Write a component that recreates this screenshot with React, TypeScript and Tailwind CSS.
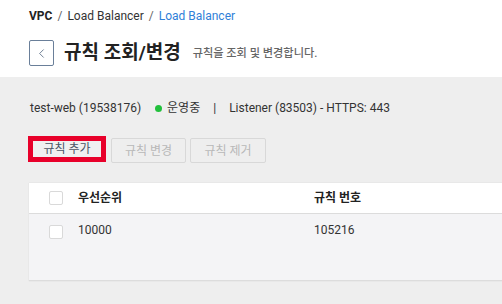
import { ChevronLeft } from 'lucide-react';

const FONT = "font-['Roboto','Noto_Sans_CJK_KR',sans-serif]";

function Checkbox() {
  return <span className="block w-[14px] h-[14px] bg-white border border-[#d9d9d9] rounded-[2px]" />;
}

export default function App() {
  return (
    <div className={`w-[502px] h-[304px] overflow-hidden bg-[#eeeeee] ${FONT}`}>
      {/* Header */}
      <div className="h-[77px] bg-white pl-[29px]">
        <div className="pt-[7px] flex items-center text-[12px] leading-[18px] text-[#333]">
          <span className="font-bold text-[#222]">VPC</span>
          <span className="mx-[5px] text-[#666]">/</span>
          <span>Load Balancer</span>
          <span className="mx-[5px] text-[#666]">/</span>
          <span className="text-[#2f80d8]">Load Balancer</span>
        </div>
        <div className="mt-[14px] flex items-center">
          <button className="w-[25px] h-[26px] border border-[#6a7f99] rounded-[2px] flex items-center justify-center text-[#4a5f7a]">
            <ChevronLeft size={15} strokeWidth={1.25} />
          </button>
          <h1 className="ml-[10px] text-[19px] font-bold text-[#222] leading-[26px]">규칙 조회/변경</h1>
          <span className="ml-[12px] text-[11.2px] text-[#666] font-medium leading-[26px] mt-[2px]">규칙을 조회 및 변경합니다.</span>
        </div>
      </div>

      {/* Body */}
      <div className="pl-[30px] pt-[22px]">
        <div className="flex items-center h-[18px] text-[12px] text-[#333]">
          <span>test-web (19538176)</span>
          <span className="ml-[14px] w-[7px] h-[7px] rounded-full bg-[#22c03c]" />
          <span className="ml-[5px]">운영중</span>
          <span className="ml-[13px]">|</span>
          <span className="ml-[13px]">Listener (83503) - HTTPS: 443</span>
        </div>

        <div className="mt-[19px] flex items-start text-[12px]">
          <button className="-ml-[2px] w-[78px] h-[26px] border-[5px] border-[#e8002a] bg-[#f0f0f0] text-[#4a5466] flex items-center justify-center">
            규칙 추가
          </button>
          <button className="ml-[5px] mt-[2px] w-[75px] h-[25px] border border-[#d8d8d8] rounded-[2px] text-[#b8b8b8]">
            규칙 변경
          </button>
          <button className="ml-[4px] mt-[2px] w-[76px] h-[25px] border border-[#d8d8d8] rounded-[2px] text-[#b8b8b8]">
            규칙 제거
          </button>
        </div>

        <div className="mt-[20px] -ml-[1px] w-[520px] shadow-[0_0_1px_rgba(0,0,0,0.15)] text-[12px]">
          <div className="h-[31px] bg-white border-b border-[#dcdcdc] flex items-center font-bold text-[#222]">
            <div className="w-[49px] pl-[20px]"><Checkbox /></div>
            <div className="w-[236px]">우선순위</div>
            <div>규칙 번호</div>
          </div>
          <div className="h-[67px] bg-[#f4f4f6] border-b border-[#dcdcdc] flex items-start pt-[11px] text-[#333]">
            <div className="w-[49px] pl-[20px]"><Checkbox /></div>
            <div className="w-[236px] leading-[14px] -mt-[2px]">10000</div>
            <div className="leading-[14px] -mt-[2px]">105216</div>
          </div>
        </div>
      </div>
    </div>
  );
}
